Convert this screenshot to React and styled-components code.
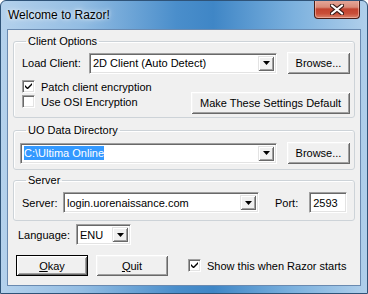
import React from "react";
import styled, { createGlobalStyle } from "styled-components";

const GlobalStyle = createGlobalStyle`
  html, body { margin: 0; padding: 0; background: #fff; }
  body { font-family: "Liberation Sans", Arial, sans-serif; font-size: 11px; color: #000; }
  * { box-sizing: border-box; }
`;

const Window = styled.div`
  width: 368px;
  height: 294px;
  display: flex;
  flex-direction: column;
  border: 1px solid #2f5378;
  border-radius: 6px 6px 0 0;
  background: linear-gradient(90deg, #b4d1ec 0%, #93bde3 22%, #4a8ecb 48%, #3f86c6 58%, #7cb1de 80%, #b0cfeb 100%);
  overflow: hidden;
`;

const TitleBar = styled.div`
  height: 28px;
  display: flex;
  justify-content: space-between;
  align-items: flex-start;
  padding-left: 7px;
`;

const Title = styled.span`
  margin-top: 7px;
  font-size: 12px;
  color: #000;
  text-shadow: 0 0 6px rgba(255, 255, 255, 0.9), 0 0 3px rgba(255, 255, 255, 0.8);
`;

const CloseButton = styled.div`
  width: 46px;
  height: 19px;
  margin-right: 7px;
  margin-top: -1px;
  display: flex;
  align-items: center;
  justify-content: center;
  border: 1px solid #4a1d16;
  border-top: none;
  border-radius: 0 0 4px 4px;
  background: linear-gradient(180deg, #e6aa9d 0%, #d98a78 40%, #c2432f 50%, #c94e38 75%, #d9836c 100%);
  box-shadow: inset 0 0 0 1px rgba(255, 210, 200, 0.5);
`;

const Client = styled.div`
  flex: 1;
  margin: 0 6px 7px 6px;
  background: #f0f0f0;
  border: 1px solid #6a8ab0;
  padding: 5px 5px 0 5px;
  display: flex;
  flex-direction: column;
`;

const Group = styled.fieldset`
  margin: ${p => p.$mt || 0}px 0 0 0;
  padding: ${p => p.$pt || 4}px 4px ${p => p.$pb || 3}px 6px;
  border: 1px solid #cdd3d8;
  border-radius: 3px;
  box-shadow: inset 1px 1px 0 #fff;
  min-width: 0;
`;

const Legend = styled.legend`
  padding: 0 2px;
  margin-left: 6px;
  line-height: 13px;
`;

const Row = styled.div`
  display: flex;
  align-items: center;
`;

const Label = styled.span`
  width: ${p => (p.$w ? `${p.$w}px` : "auto")};
  margin-left: ${p => p.$ml || 0}px;
  flex: none;
  white-space: nowrap;
`;

const Field = styled.div`
  display: flex;
  align-items: stretch;
  flex: none;
  width: ${p => p.$w}px;
  height: ${p => p.$h || 21}px;
  margin-left: ${p => p.$ml || 0}px;
  background: #fff;
  border-top: 1px solid #a0a0a0;
  border-left: 1px solid #a0a0a0;
  border-bottom: 1px solid #fff;
  border-right: 1px solid #fff;
  box-shadow: inset 1px 1px 0 #696969, inset -1px -1px 0 #e3e3e3;
  padding: 2px;
`;

const Value = styled.span`
  flex: 1;
  display: flex;
  align-items: center;
  padding-left: 1px;
  white-space: nowrap;
  overflow: hidden;
`;

const Selected = styled.span`
  background: #3399ff;
  color: #fff;
  padding: 1px 0;
`;

const DropButton = styled.span`
  width: 16px;
  flex: none;
  display: flex;
  align-items: center;
  justify-content: center;
  background: #f0f0f0;
  box-shadow: inset 1px 1px 0 #e3e3e3, inset -1px -1px 0 #696969, inset 2px 2px 0 #fff, inset -2px -2px 0 #a0a0a0;
`;

const Button = styled.button`
  width: ${p => p.$w}px;
  height: ${p => p.$h || 22}px;
  margin-left: ${p => p.$ml || 0}px;
  flex: none;
  padding: 0;
  font-family: "Liberation Sans", Arial, sans-serif;
  font-size: 11px;
  color: #000;
  background: #f0f0f0;
  border: ${p => (p.$default ? "1px solid #000" : "none")};
  box-shadow: inset 1px 1px 0 #fff, inset -1px -1px 0 #696969, inset 2px 2px 0 #f4f4f4, inset -2px -2px 0 #a0a0a0;
  u { text-decoration: underline; }
`;

const CheckRow = styled.label`
  display: flex;
  align-items: center;
  height: 15px;
  gap: 6px;
  margin-left: ${p => p.$ml || 0}px;
`;

const Box = styled.span`
  width: 13px;
  height: 13px;
  flex: none;
  display: flex;
  align-items: center;
  justify-content: center;
  background: #fff;
  border-top: 1px solid #a0a0a0;
  border-left: 1px solid #a0a0a0;
  border-bottom: 1px solid #fff;
  border-right: 1px solid #fff;
  box-shadow: inset 1px 1px 0 #696969, inset -1px -1px 0 #e3e3e3;
`;

const CheckColumn = styled.div`
  display: flex;
  flex-direction: column;
  margin-bottom: 5px;
  margin-left: 2px;
`;

const SplitRow = styled.div`
  display: flex;
  justify-content: space-between;
  align-items: flex-end;
  margin-top: 5px;
`;

const LangRow = styled(Row)`
  margin-top: 3px;
  padding-left: 5px;
`;

const BottomRow = styled(Row)`
  margin-top: 10px;
  padding-left: 3px;
`;

const Arrow = () => (
  <svg width="7" height="4" viewBox="0 0 7 4">
    <path d="M0 0h7L3.5 4z" fill="#000" />
  </svg>
);

const Check = ({ on }) => (
  <Box>
    {on && (
      <svg width="7" height="7" viewBox="0 0 7 7">
        <path d="M0 2v2l2 2h1l4-4V0L2.5 4.5z" fill="#000" />
      </svg>
    )}
  </Box>
);

const Combo = ({ w, ml, children }) => (
  <Field $w={w} $ml={ml}>
    <Value>{children}</Value>
    <DropButton>
      <Arrow />
    </DropButton>
  </Field>
);

export default function App() {
  return (
    <>
      <GlobalStyle />
      <Window>
        <TitleBar>
          <Title>Welcome to Razor!</Title>
          <CloseButton>
            <svg width="14" height="11" viewBox="0 0 14 11">
              <path d="M2 1.5l10 8M12 1.5l-10 8" stroke="#3a1b18" strokeWidth="4.2" strokeLinecap="round" />
              <path d="M2 1.5l10 8M12 1.5l-10 8" stroke="#fff" strokeWidth="2.2" strokeLinecap="round" />
            </svg>
          </CloseButton>
        </TitleBar>
        <Client>
          <Group $pt={4} $pb={3}>
            <Legend>Client Options</Legend>
            <Row>
              <Label $w={67} $ml={2}>Load Client:</Label>
              <Combo w={188}>2D Client (Auto Detect)</Combo>
              <Button $w={63} $ml={10}>Browse...</Button>
            </Row>
            <SplitRow>
              <CheckColumn>
                <CheckRow>
                  <Check on />
                  Patch client encryption
                </CheckRow>
                <CheckRow>
                  <Check />
                  Use OSI Encryption
                </CheckRow>
              </CheckColumn>
              <Button $w={159}>Make These Settings Default</Button>
            </SplitRow>
          </Group>

          <Group $mt={6} $pt={5} $pb={5}>
            <Legend>UO Data Directory</Legend>
            <Row>
              <Combo w={257}>
                <Selected>C:\Ultima Online</Selected>
              </Combo>
              <Button $w={63} $ml={10}>Browse...</Button>
            </Row>
          </Group>

          <Group $mt={4} $pt={5} $pb={7}>
            <Legend>Server</Legend>
            <Row>
              <Label $w={41} $ml={2}>Server:</Label>
              <Combo w={196}>login.uorenaissance.com</Combo>
              <Label $ml={16}>Port:</Label>
              <Field $w={38} $ml={11}>
                <Value>2593</Value>
              </Field>
            </Row>
          </Group>

          <LangRow>
            <Label $w={58}>Language:</Label>
            <Combo w={55}>ENU</Combo>
          </LangRow>

          <BottomRow>
            <Button $w={72} $h={21} $default>
              <u>O</u>kay
            </Button>
            <Button $w={72} $h={21} $ml={8}>
              <u>Q</u>uit
            </Button>
            <CheckRow $ml={20}>
              <Check on />
              Show this when Razor starts
            </CheckRow>
          </BottomRow>
        </Client>
      </Window>
    </>
  );
}
